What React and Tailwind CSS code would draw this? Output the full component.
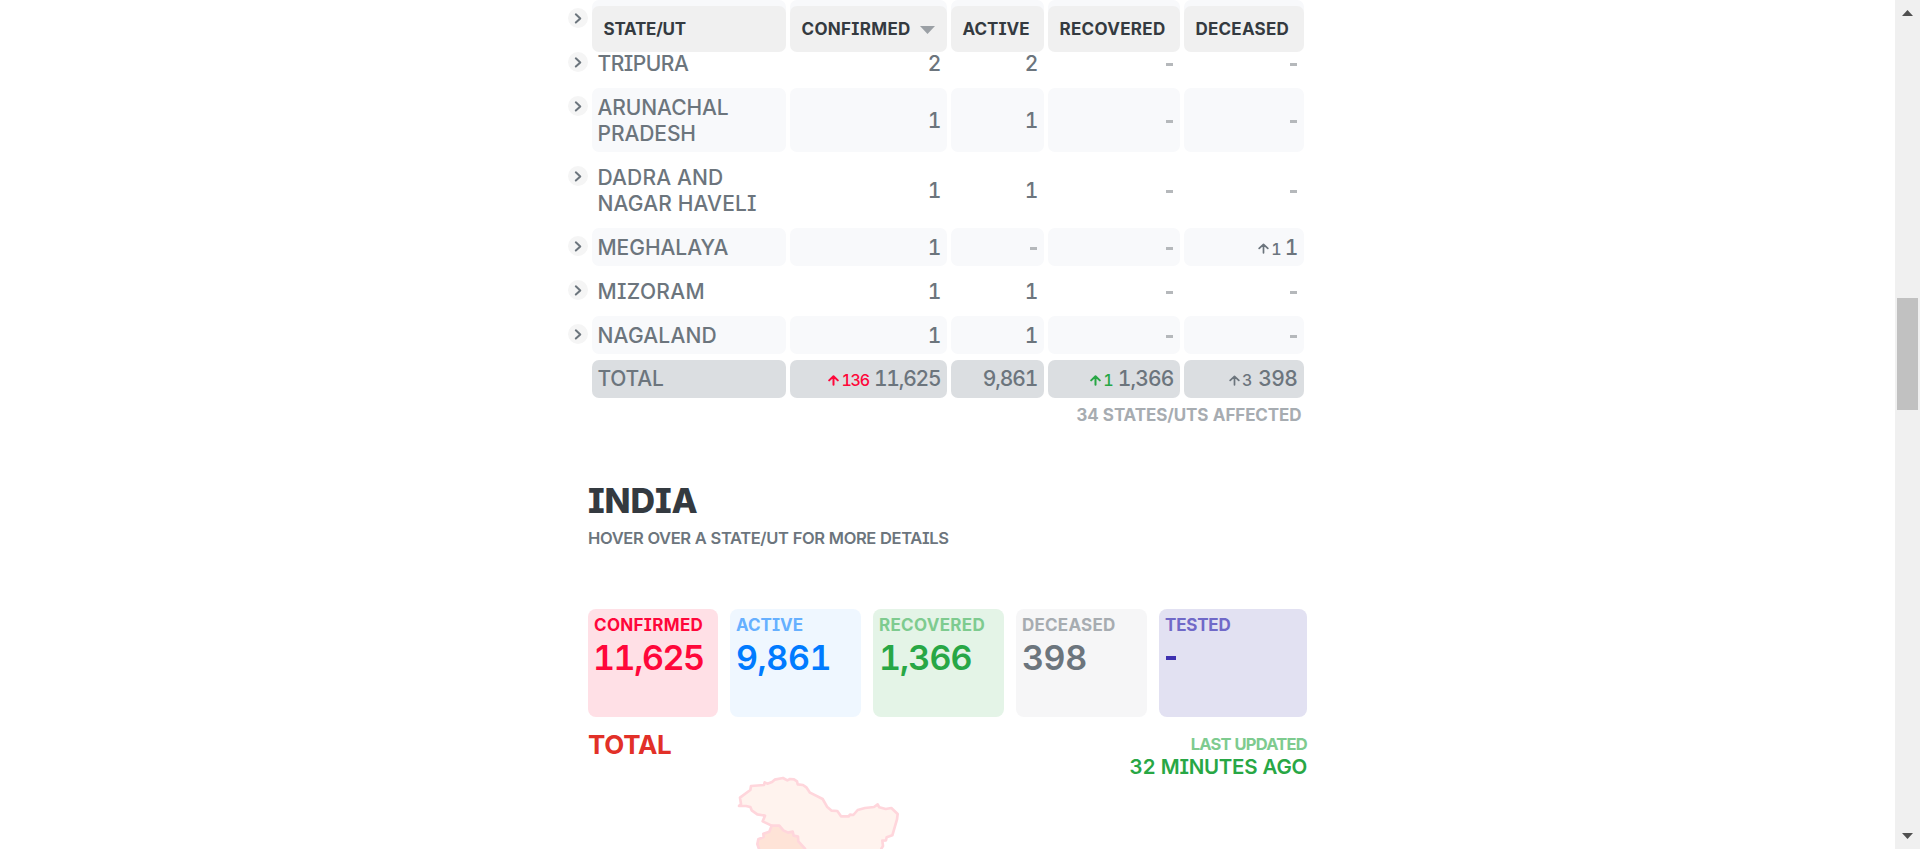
const COLS = 'grid grid-cols-[194px_157px_93px_132px_120px] gap-x-1';

const HEADERS = [
  { label: 'STATE/UT', cls: 'tracking-[-0.22px]' },
  { label: 'CONFIRMED', cls: 'tracking-[0.31px]', sorted: true },
  { label: 'ACTIVE', cls: '' },
  { label: 'RECOVERED', cls: 'tracking-[0.31px]' },
  { label: 'DECEASED', cls: 'tracking-[0.23px]' },
];

const ROWS = [
  { name: ['TRIPURA'], cls: 'tracking-[-0.5px]', v: ['2', '2', '-', '-'] },
  { name: ['ARUNACHAL', 'PRADESH'], cls: 'tracking-[-0.08px]', shaded: true, v: ['1', '1', '-', '-'] },
  { name: ['DADRA AND', 'NAGAR HAVELI'], cls: 'tracking-[0.16px]', v: ['1', '1', '-', '-'] },
  { name: ['MEGHALAYA'], cls: 'tracking-[-0.05px]', shaded: true, v: ['1', '-', '-', '1'], delta: '1' },
  { name: ['MIZORAM'], cls: 'tracking-[0.33px]', v: ['1', '1', '-', '-'] },
  { name: ['NAGALAND'], cls: 'tracking-[0.19px]', shaded: true, v: ['1', '1', '-', '-'] },
];

const CARDS = [
  { label: 'CONFIRMED', value: '11,625', box: 'bg-[#ffe0e6]', l: 'text-[#ff073a] tracking-[0.31px]', n: '-ml-px text-[#ff073a] tracking-[-1.4px]' },
  { label: 'ACTIVE', value: '9,861', box: 'bg-[#eff7ff]', l: 'text-[#66b0ff]', n: 'text-[#007bff] tracking-[-0.4px]' },
  { label: 'RECOVERED', value: '1,366', box: 'bg-[#e4f4e7]', l: 'text-[#7ecb8f] tracking-[0.31px]', n: 'text-[#28a745] tracking-[-0.9px]' },
  { label: 'DECEASED', value: '398', box: 'bg-[#f6f6f7]', l: 'text-[#a7acb1] tracking-[0.23px]', n: 'text-[#6c757d] tracking-[-0.4px]' },
  { label: 'TESTED', value: '-', box: 'bg-[#e2e1f2]', l: 'text-[#7069c8] -tracking-[0.2px]', n: 'text-[#3e30b0]' },
];

function Chevron() {
  return (
    <div className="mt-[8px] flex size-5 shrink-0 items-center justify-center rounded-full bg-[#f5f5f5]">
      <svg width="20" height="20" viewBox="0 0 20 20" fill="none" stroke="#6c757d" strokeWidth="2" strokeLinecap="round" strokeLinejoin="round">
        <path d="M7.8 6.3 L12.3 10.4 L7.8 14.5" />
      </svg>
    </div>
  );
}

function Delta({ value, cls, heavy }) {
  return (
    <span className={`flex items-center gap-[2px] pt-[2px] text-[16px] ${cls}`}>
      <svg width="11" height="11" viewBox="0 0 11 11" fill="none" stroke="currentColor" strokeWidth={heavy ? 2 : 1.7} strokeLinecap="round" strokeLinejoin="round">
        <path d="M5.5 9.8V1.3M1.2 5.4L5.5 1.3L9.8 5.4" />
      </svg>
      {value}
    </span>
  );
}

function Value({ text }) {
  return text === '-' ? (
    <span className="mr-[0.5px] mt-[2px] h-[2.5px] w-[7px] overflow-hidden bg-[#b5b8bb] text-[1px] leading-none text-transparent">-</span>
  ) : (
    <span className="-mr-[0.8px]">{text}</span>
  );
}

function Cell({ shaded, children }) {
  return (
    <div className={`flex items-center justify-end rounded-[7px] pr-[6.5px] pt-px ${shaded ? 'bg-[#f8f9fb]' : ''}`}>{children}</div>
  );
}

function Row({ row }) {
  return (
    <div className="flex gap-1">
      <Chevron />
      <div className={COLS}>
        <div className={`min-h-[38px] rounded-[7px] pb-[5px] pl-[5.5px] pt-[7px] leading-[26px] ${row.shaded ? 'bg-[#f8f9fb]' : ''} ${row.cls}`}>
          {row.name.map((n) => (
            <div key={n} className="whitespace-nowrap">{n}</div>
          ))}
        </div>
        {row.v.map((v, i) => (
          <Cell key={i} shaded={row.shaded}>
            {i === 3 && row.delta && <Delta value={row.delta} cls="mr-[4px] tracking-[-0.9px] text-[#6c757d]" />}
            <Value text={v} />
          </Cell>
        ))}
      </div>
    </div>
  );
}

function TotalCell({ children }) {
  return <div className="flex items-center justify-end rounded-[7px] bg-[#dbdee1] pr-[7px]">{children}</div>;
}

export default function App() {
  return (
    <div className="flex h-[849px] w-[1920px] overflow-hidden bg-white font-['Inter',sans-serif] text-[21px] font-medium text-[#6c757d] [font-feature-settings:'tnum','cv08']">
      <main className="w-[1895px]">
        <div className="relative ml-[568px] w-[740px]">
          <section className="flex flex-col gap-[6px]">
            <div className="flex gap-1">
              <Chevron />
              <div className={COLS}>
                {HEADERS.map((h) => (
                  <div key={h.label} className="h-[38px] rounded-[7px] bg-[#f8f9fb]" />
                ))}
              </div>
            </div>
            {ROWS.map((r) => (
              <Row key={r.name[0]} row={r} />
            ))}
            <div className="flex pl-6">
              <div className={`${COLS} h-[38px]`}>
                <div className="flex items-center rounded-[7px] bg-[#dbdee1] pl-[5.5px] tracking-[-0.21px]">TOTAL</div>
                <TotalCell>
                  <Delta value="136" cls="mr-[5px] tracking-[-1.2px] text-[#ff073a]" heavy />
                  <span className="mr-[-0.4px] tracking-[-1.2px]">11,625</span>
                </TotalCell>
                <TotalCell><span className="mr-[-0.4px] tracking-[-1.1px]">9,861</span></TotalCell>
                <TotalCell>
                  <Delta value="1" cls="mr-[5px] tracking-[-0.9px] text-[#28a745]" heavy />
                  <span className="mr-[-0.4px] tracking-[-0.9px]">1,366</span>
                </TotalCell>
                <TotalCell>
                  <Delta value="3" cls="mr-[7px] tracking-[-0.9px] text-[#6c757d]" />
                  <span className="mr-[-0.4px] tracking-[-0.6px]">398</span>
                </TotalCell>
              </div>
            </div>
          </section>
          <div className={`absolute left-[24px] top-[6px] ${COLS} h-[46px]`}>
            {HEADERS.map((h) => (
              <div key={h.label} className={`flex items-center rounded-[7px] bg-[#f0f0f0] pl-[11.5px] pt-px text-[17px] font-bold text-[#343a40] ${h.cls}`}>
                {h.label}
                {h.sorted && (
                  <svg className="ml-[9.5px]" width="15" height="8" viewBox="0 0 15 8">
                    <path d="M0 0H15L7.5 8Z" fill="#9ba0a5" />
                  </svg>
                )}
              </div>
            ))}
          </div>
          <p className="mt-[7px] pr-[6.5px] text-right text-[17px] font-bold leading-5 tracking-[-0.1px] text-[#a7acb1]">34 STATES/UTS AFFECTED</p>

          <section className="pl-5">
            <h1 className="mt-[56px] text-[34px] font-extrabold leading-[40px] tracking-[-0.1px] text-[#343a40]">INDIA</h1>
            <p className="mt-[7px] text-[16.5px] font-semibold leading-5 tracking-[-0.36px]">HOVER OVER A STATE/UT FOR MORE DETAILS</p>
            <div className="mt-[61px] grid h-[108px] grid-cols-[130px_131px_131px_131px_148px] gap-x-3">
              {CARDS.map((c) => (
                <div key={c.label} className={`rounded-[8px] pl-[6px] pt-[6px] ${c.box}`}>
                  <div className={`text-[17px] font-bold leading-5 ${c.l}`}>{c.label}</div>
                  <div className={`mt-[3px] text-[34px] font-semibold leading-[40px] ${c.n}`}>
                    {c.value === '-' ? <div className="ml-px mt-[21px] h-1 w-[10px] overflow-hidden bg-[#3e30b0] text-[1px] leading-none text-transparent">-</div> : c.value}
                  </div>
                </div>
              ))}
            </div>
            <div className="mt-[11px] flex justify-between">
              <h2 className="text-[26px] font-bold leading-[33px] tracking-[-0.3px] text-[#e23028]">TOTAL</h2>
              <div className="pr-px pt-[6px] text-right">
                <div className="text-[16.5px] font-bold leading-5 tracking-[-0.76px] text-[#7ecb8f]">LAST UPDATED</div>
                <div className="text-[20.5px] font-semibold leading-[25px] tracking-[-0.26px] text-[#28a745]">32 MINUTES AGO</div>
              </div>
            </div>
            <svg className="-mt-[19px] ml-[132px] block" width="200" height="89" viewBox="0 0 600 267" strokeLinejoin="round" stroke="#ffd6dc" strokeWidth="8">
              <path fill="#fff3ee" d="M57 138L63 132L60 113L91 90L93 78L132 75L134 67L142 71L156 66L164 59L189 54L202 61L210 57L222 58L231 64L233 73L249 75L259 82L270 98L308 117L321 140L335 152L352 153L363 169L386 169L390 164L400 165L413 150L435 144L462 141L473 133L478 142L497 147L514 144L533 162L531 178L517 226L500 232L498 241L487 242L489 258L484 266L484 300H160L155 197L128 184L135 167L112 163L95 151L91 141L78 138Z" />
              <path fill="#fee3d7" d="M116 300L118 270L112 252L115 238L131 231L130 221L148 215L155 197L178 197L190 211L204 218L218 215L221 227L234 230L235 244L255 266L270 300Z" />
            </svg>
          </section>
        </div>
      </main>
      <aside className="flex h-[849px] w-[25px] flex-col items-center bg-[#f0f0f0]">
        <svg className="mt-[10px] shrink-0" width="11" height="6" viewBox="0 0 11 6"><path d="M5.5 0L11 6H0Z" fill="#505050" /></svg>
        <div className="mt-[282px] h-[112px] w-[21px] shrink-0 bg-[#c1c1c1]" />
        <svg className="mt-[423px] shrink-0" width="11" height="6" viewBox="0 0 11 6"><path d="M0 0H11L5.5 6Z" fill="#505050" /></svg>
      </aside>
    </div>
  );
}
